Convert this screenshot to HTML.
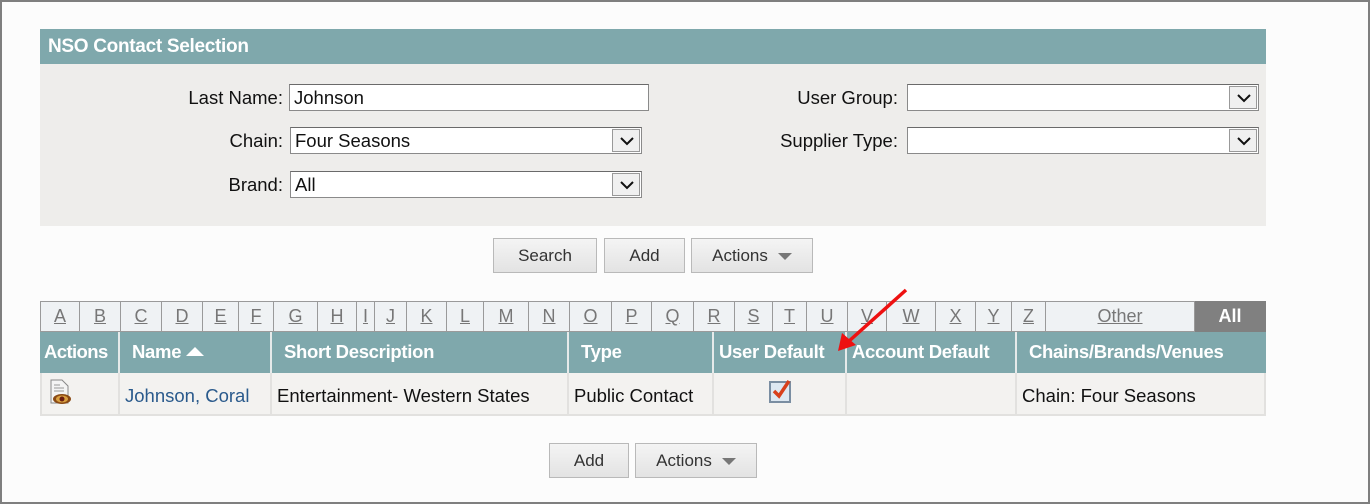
<!DOCTYPE html>
<html><head><meta charset="utf-8"><style>
*{box-sizing:border-box;margin:0;padding:0}
body{width:1370px;height:504px;background:#fcfcfc;font-family:"Liberation Sans",Arial,sans-serif;position:relative;overflow:hidden;color:#111}
.a{position:absolute}
.frame{left:0;top:0;width:1370px;height:504px;border:2px solid #7f7f7f}
.hdr{left:40px;top:29px;width:1226px;height:35px;background:#7fa8ac;color:#fff;font-weight:bold;font-size:19px;padding:7px 0 0 8px;letter-spacing:-0.3px}
.panel{left:40px;top:64px;width:1226px;height:162px;background:#eeedeb}
.lbl{font-size:18.5px;text-align:right;width:250px}
.inp{background:#fff;border:1px solid #8a8a8a;border-top-color:#6a6a6a;font-size:18.5px;padding:2px 0 0 4px;height:27px}
.dd{position:absolute;right:1px;top:1px;width:28px;height:23px;border:1px solid #999;background:#f0f0f0}
.dd svg{position:absolute;left:7px;top:6px}
.btn{background:linear-gradient(#f4f4f4,#e3e3e3);border:1px solid #b9b9b9;font-size:17px;color:#333;text-align:center;padding-top:7px}
.tri{display:inline-block;width:0;height:0;border-left:7px solid transparent;border-right:7px solid transparent;border-top:7px solid #777;margin-left:10px;vertical-align:middle}
.alpha{top:301px;height:31px;background:#eff2f4;border:1px solid #9a9a9a;border-left:none;font-size:18px;color:#777;text-align:center;text-decoration:underline;padding-top:4px}
.th{top:332px;height:41px;background:#7fa8ac;color:#fff;font-weight:bold;font-size:18.5px;padding:9px 0 0 6px;border-left:2px solid #e6eaea;letter-spacing:-0.3px;white-space:nowrap}
.td{top:373px;height:43px;background:#f3f2f0;font-size:18.5px;padding:12px 0 0 5px;border-left:2px solid #e2e1df;border-bottom:2px solid #e2e1df;white-space:nowrap}
</style></head><body>
<div class="a frame"></div>
<div class="a hdr">NSO Contact Selection</div>
<div class="a panel"></div>

<div class="a lbl" style="left:33px;top:87px">Last Name:</div>
<div class="a inp" style="left:289px;top:84px;width:360px">Johnson</div>
<div class="a lbl" style="left:33px;top:130px">Chain:</div>
<div class="a inp" style="left:290px;top:127px;width:352px">Four Seasons<div class="dd"><svg width="14" height="10"><path d="M1 2 L7 8 L13 2" stroke="#111" stroke-width="2" fill="none"/></svg></div></div>
<div class="a lbl" style="left:33px;top:174px">Brand:</div>
<div class="a inp" style="left:290px;top:171px;width:352px">All<div class="dd"><svg width="14" height="10"><path d="M1 2 L7 8 L13 2" stroke="#111" stroke-width="2" fill="none"/></svg></div></div>

<div class="a lbl" style="left:648px;top:87px">User Group:</div>
<div class="a inp" style="left:907px;top:84px;width:352px"><div class="dd"><svg width="14" height="10"><path d="M1 2 L7 8 L13 2" stroke="#111" stroke-width="2" fill="none"/></svg></div></div>
<div class="a lbl" style="left:648px;top:130px">Supplier Type:</div>
<div class="a inp" style="left:907px;top:127px;width:352px"><div class="dd"><svg width="14" height="10"><path d="M1 2 L7 8 L13 2" stroke="#111" stroke-width="2" fill="none"/></svg></div></div>

<div class="a btn" style="left:493px;top:238px;width:104px;height:35px">Search</div>
<div class="a btn" style="left:604px;top:238px;width:81px;height:35px">Add</div>
<div class="a btn" style="left:691px;top:238px;width:122px;height:35px">Actions<span class="tri"></span></div>

<div class="a alpha" style="left:40px;width:40px;border-left:1px solid #9a9a9a">A</div>
<div class="a alpha" style="left:80px;width:41px">B</div>
<div class="a alpha" style="left:121px;width:41px">C</div>
<div class="a alpha" style="left:162px;width:41px">D</div>
<div class="a alpha" style="left:203px;width:36px">E</div>
<div class="a alpha" style="left:239px;width:35px">F</div>
<div class="a alpha" style="left:274px;width:44px">G</div>
<div class="a alpha" style="left:318px;width:39px">H</div>
<div class="a alpha" style="left:357px;width:18px">I</div>
<div class="a alpha" style="left:375px;width:32px">J</div>
<div class="a alpha" style="left:407px;width:40px">K</div>
<div class="a alpha" style="left:447px;width:37px">L</div>
<div class="a alpha" style="left:484px;width:45px">M</div>
<div class="a alpha" style="left:529px;width:41px">N</div>
<div class="a alpha" style="left:570px;width:42px">O</div>
<div class="a alpha" style="left:612px;width:40px">P</div>
<div class="a alpha" style="left:652px;width:42px">Q</div>
<div class="a alpha" style="left:694px;width:41px">R</div>
<div class="a alpha" style="left:735px;width:38px">S</div>
<div class="a alpha" style="left:773px;width:34px">T</div>
<div class="a alpha" style="left:807px;width:41px">U</div>
<div class="a alpha" style="left:848px;width:39px">V</div>
<div class="a alpha" style="left:887px;width:49px">W</div>
<div class="a alpha" style="left:936px;width:40px">X</div>
<div class="a alpha" style="left:976px;width:36px">Y</div>
<div class="a alpha" style="left:1012px;width:34px">Z</div>
<div class="a alpha" style="left:1046px;width:149px">Other</div>
<div class="a alpha" style="left:1195px;width:71px;background:#808080;color:#fff;text-decoration:none;font-weight:bold;border-color:#808080">All</div>

<div class="a th" style="left:40px;width:78px;padding-left:4px;border-left:none;letter-spacing:-0.6px">Actions</div>
<div class="a th" style="left:118px;width:152px;padding-left:12px">Name <span style="display:inline-block;width:0;height:0;border-left:9px solid transparent;border-right:9px solid transparent;border-bottom:9px solid #fff;vertical-align:2px"></span></div>
<div class="a th" style="left:270px;width:297px;padding-left:12px">Short Description</div>
<div class="a th" style="left:567px;width:145px;padding-left:12px">Type</div>
<div class="a th" style="left:712px;width:133px;padding-left:5px">User Default</div>
<div class="a th" style="left:845px;width:170px;padding-left:5px">Account Default</div>
<div class="a th" style="left:1015px;width:251px;padding-left:12px">Chains/Brands/Venues</div>

<div class="a td" style="left:40px;width:78px;padding:6px 0 0 6px;border-left:2px solid #e2e1df">
<svg width="28" height="30"><path d="M3 1 H14 L20 7 V24 H3 Z" fill="#f4f4f4" stroke="#888"/><path d="M6 6 H12 M6 9 H16 M6 12 H16" stroke="#999"/><ellipse cx="14" cy="20" rx="9" ry="5" fill="#8a4a14"/><ellipse cx="14" cy="20" rx="6" ry="3.5" fill="#d9a040"/><circle cx="14" cy="20" r="2.5" fill="#6a1d10"/></svg></div>
<div class="a td" style="left:118px;width:152px;color:#2a5a8c">Johnson, Coral</div>
<div class="a td" style="left:270px;width:297px">Entertainment- Western States</div>
<div class="a td" style="left:567px;width:145px">Public Contact</div>
<div class="a td" style="left:712px;width:133px;padding:5px 0 0 54px"><svg width="26" height="26"><rect x="2" y="4" width="20" height="20" fill="#dde8f2" stroke="#7a8ea2" stroke-width="2"/><path d="M6 13 L11 18 L21 3" stroke="#d8401c" stroke-width="3.5" fill="none"/></svg></div>
<div class="a td" style="left:845px;width:170px"></div>
<div class="a td" style="left:1015px;width:251px;padding-left:5px;border-right:2px solid #e2e1df">Chain: Four Seasons</div>

<div class="a btn" style="left:549px;top:443px;width:80px;height:35px">Add</div>
<div class="a btn" style="left:635px;top:443px;width:122px;height:35px">Actions<span class="tri"></span></div>

<svg class="a" style="left:0;top:0" width="1370" height="504"><path d="M906 290 L848 342" stroke="#ee1111" stroke-width="3.5"/><path d="M838 351 L842 333 L856 345 Z" fill="#ee1111"/></svg>
</body></html>
